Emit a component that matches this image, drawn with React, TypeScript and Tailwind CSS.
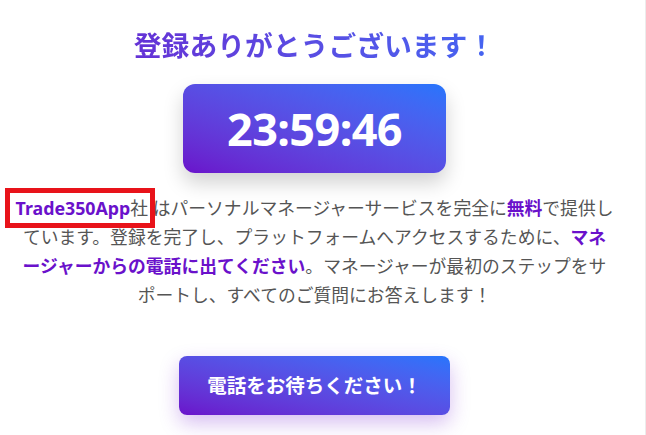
const JP = { fontFamily: '"Noto Sans", "Noto Sans CJK JP", sans-serif' };

function Countdown() {
  return (
    <div className="mt-[19px] rounded-xl bg-linear-to-tr from-[#6a11cb] to-[#2575fc] px-[44px] py-[22px] shadow-[0_10px_20px_rgba(0,0,0,0.18)]">
      <span className="block text-[45px] font-bold leading-none tracking-[-0.6px] text-white">23:59:46</span>
    </div>
  );
}

export default function App() {
  return (
    <div className="h-[435px] w-[646px] overflow-hidden border-r border-[#ececec] bg-white" style={JP}>
      <div className="flex w-[629px] flex-col items-center">
        {/* heading */}
        <h1 className="w-full bg-linear-to-r from-[#6a11cb] to-[#2575fc] bg-clip-text pt-[25px] text-center text-[27.8px] font-bold leading-[40px] text-transparent">
          登録ありがとうございます！
        </h1>

        <Countdown />

        {/* message */}
        <p className="mt-[21px] w-[629px] text-center text-[17.8px] leading-[29px] text-[#555]">
          <span className="relative">
            <span className="absolute -bottom-[8px] -left-[11px] -right-[7px] -top-[8px] border-[5px] border-[#e8131a]" />
            <strong className="font-bold text-[#6a11cb]">Trade350App</strong>社
          </span>{" "}
          はパーソナルマネージャーサービスを完全に<strong className="font-bold text-[#6a11cb]">無料</strong>
          で提供し
          <br />
          ています。登録を完了し、プラットフォームへアクセスするために、
          <strong className="font-bold text-[#6a11cb]">
            マネ
            <br />
            ージャーからの電話に出てください
          </strong>
          。マネージャーが最初のステップをサ
          <br />
          ポートし、すべてのご質問にお答えします！
        </p>

        {/* call to action */}
        <button className="mt-[46px] rounded-lg bg-linear-to-tr from-[#6a11cb] to-[#2575fc] px-[28px] py-[14px] text-[19.5px] font-bold leading-[31px] text-white shadow-[0_8px_20px_rgba(106,17,203,0.28)]">
          電話をお待ちください！
        </button>
      </div>
    </div>
  );
}
